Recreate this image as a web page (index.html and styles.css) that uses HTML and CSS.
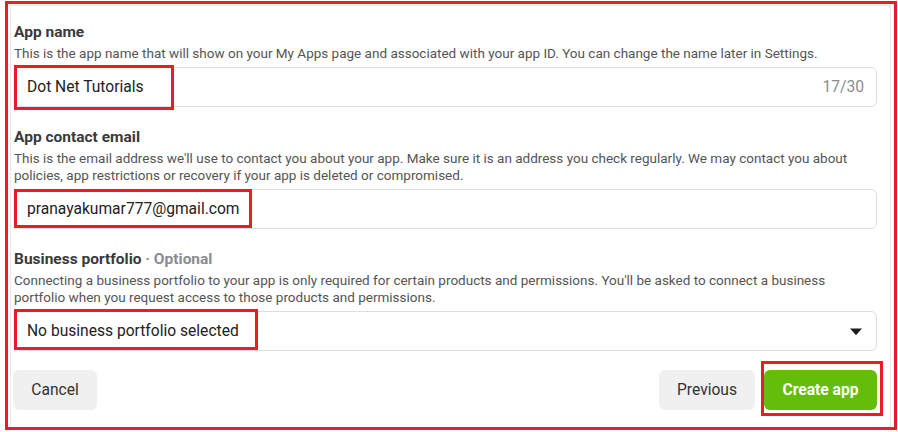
FILE: index.html
```html
<!DOCTYPE html>
<html>
<head>
<meta charset="utf-8">
<link rel="stylesheet" href="styles.css">
</head>
<body>
<div class="frame">
  <div class="dialog">
    <div class="field">
      <div class="label">App name</div>
      <div class="desc">This is the app name that will show on your My Apps page and associated with your app ID. You can change the name later in Settings.</div>
      <div class="input">
        <span class="value">Dot Net Tutorials</span>
        <span class="counter">17/30</span>
        <span class="mark mark-name"></span>
      </div>
    </div>
    <div class="field">
      <div class="label">App contact email</div>
      <div class="desc">This is the email address we'll use to contact you about your app. Make sure it is an address you check regularly. We may contact you about policies, app restrictions or recovery if your app is deleted or compromised.</div>
      <div class="input">
        <span class="value">pranayakumar777@gmail.com</span>
        <span class="mark mark-email"></span>
      </div>
    </div>
    <div class="field">
      <div class="label">Business portfolio <span class="optional">· Optional</span></div>
      <div class="desc">Connecting a business portfolio to your app is only required for certain products and permissions. You'll be asked to connect a business portfolio when you request access to those products and permissions.</div>
      <div class="input">
        <span class="value">No business portfolio selected</span>
        <svg class="caret" width="12" height="7" viewBox="0 0 12 7"><path d="M0 0.5h12L6.6 6.4a0.8 0.8 0 0 1-1.2 0z" fill="#1c1e21"/></svg>
        <span class="mark mark-biz"></span>
      </div>
    </div>
    <div class="footer">
      <button class="btn btn-gray">Cancel</button>
      <div class="right">
        <button class="btn btn-gray btn-prev">Previous</button>
        <button class="btn btn-green">Create app<span class="mark mark-create"></span></button>
      </div>
    </div>
  </div>
</div>
</body>
</html>
```
FILE: styles.css
```css
* { box-sizing: border-box; }
html, body { margin: 0; padding: 0; background: #fff; }
body {
  font-family: Roboto, "Liberation Sans", Arial, sans-serif;
  width: 898px;
  height: 432px;
  overflow: hidden;
}
.frame {
  margin: 1px 1px 0 5px;
  width: 892px;
  height: 429px;
  border: 3px solid #ec1c24;
  padding: 1px 3px 0 2px;
}
.dialog {
  height: 100%;
  border: 1px solid #e9e9e9;
  border-bottom: none;
  padding: 17px 13px 0 3px;
}
.field { margin-bottom: 21px; }
.field:nth-child(3) { margin-bottom: 19px; }
.label {
  font-size: 15.5px;
  font-weight: 700;
  line-height: 18px;
  color: #3a3a3a;
  margin-bottom: 4px;
}
.optional { color: #8a8d91; }
.desc {
  font-size: 13.5px;
  line-height: 17px;
  color: #555;
  margin-bottom: 5px;
}
.input {
  position: relative;
  height: 40px;
  border: 1px solid #dcdee2;
  border-radius: 6px;
  display: flex;
  align-items: center;
  justify-content: space-between;
  padding: 0 12px 0 12px;
  font-size: 15.6px;
  color: #222;
}
.counter { color: #8a8d91; }
.caret { margin-right: 2px; margin-top: 1px; }
.mark {
  position: absolute;
  border: 3px solid #ec1c24;
  pointer-events: none;
}
.mark-name { left: -1px; top: -3px; width: 160px; height: 45px; }
.mark-email { left: -1px; top: -1px; width: 238px; height: 39px; }
.mark-biz { left: -1px; top: -3px; width: 244px; height: 41px; }
.footer {
  display: flex;
  justify-content: space-between;
  align-items: center;
  margin-left: -1px;
}
.right { display: flex; gap: 9px; }
.btn {
  position: relative;
  height: 40px;
  border: none;
  border-radius: 6px;
  font-family: inherit;
  font-size: 15.6px;
  padding: 0;
}
.btn-gray { background: #f0f0f0; color: #333; width: 84px; }
.btn-prev { width: 96px; }
.btn-green { background: #63bd0a; color: #fff; font-weight: 700; width: 113px; }
.mark-create { left: -3px; top: -9px; width: 122px; height: 55px; }
```
